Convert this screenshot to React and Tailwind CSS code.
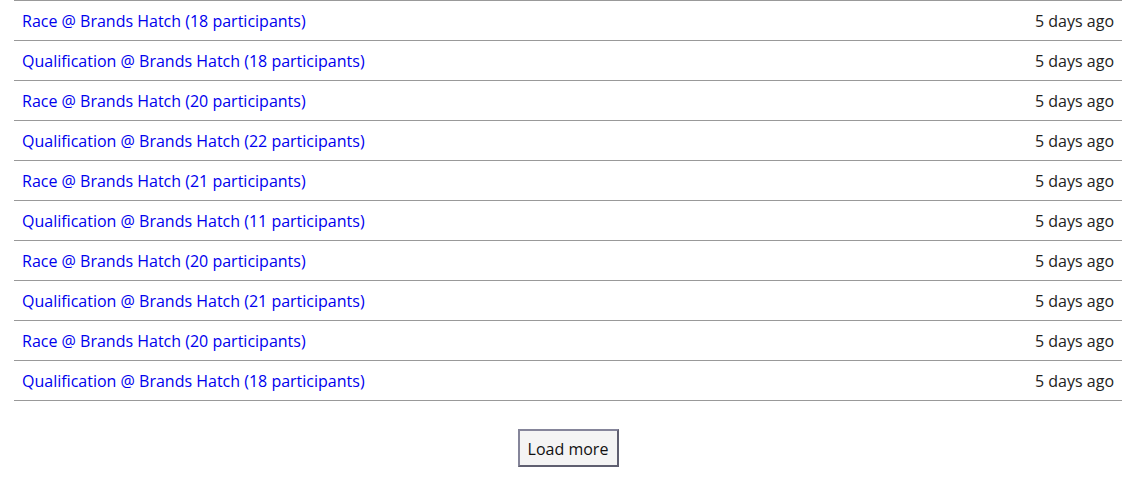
const sessions = [
  ['Race', 18],
  ['Qualification', 18],
  ['Race', 20],
  ['Qualification', 22],
  ['Race', 21],
  ['Qualification', 11],
  ['Race', 20],
  ['Qualification', 21],
  ['Race', 20],
  ['Qualification', 18],
];

export default function App() {
  return (
    <div className="bg-white min-h-screen pl-[14px] pr-[18px] text-[16px]" style={{ fontFamily: '"Open Sans", sans-serif' }}>
      <div className="border-b border-[#999]">
        {sessions.map(([type, count], i) => (
          <div key={i} className="h-10 border-t border-[#999] flex items-center justify-between px-2">
            <a href="#" className="text-[#0000ee]">
              {type} @ Brands Hatch ({count} participants)
            </a>
            <span className="text-[#222]">5 days ago</span>
          </div>
        ))}
      </div>
      <div className="flex justify-center pt-[28px]">
        <button className="h-[38px] w-[101px] pt-[2px] bg-[#f4f4f4] border-2 border-[#85859a] border-b-[#5f5f70] border-r-[#5f5f70] text-[#111]">
          Load more
        </button>
      </div>
    </div>
  );
}
